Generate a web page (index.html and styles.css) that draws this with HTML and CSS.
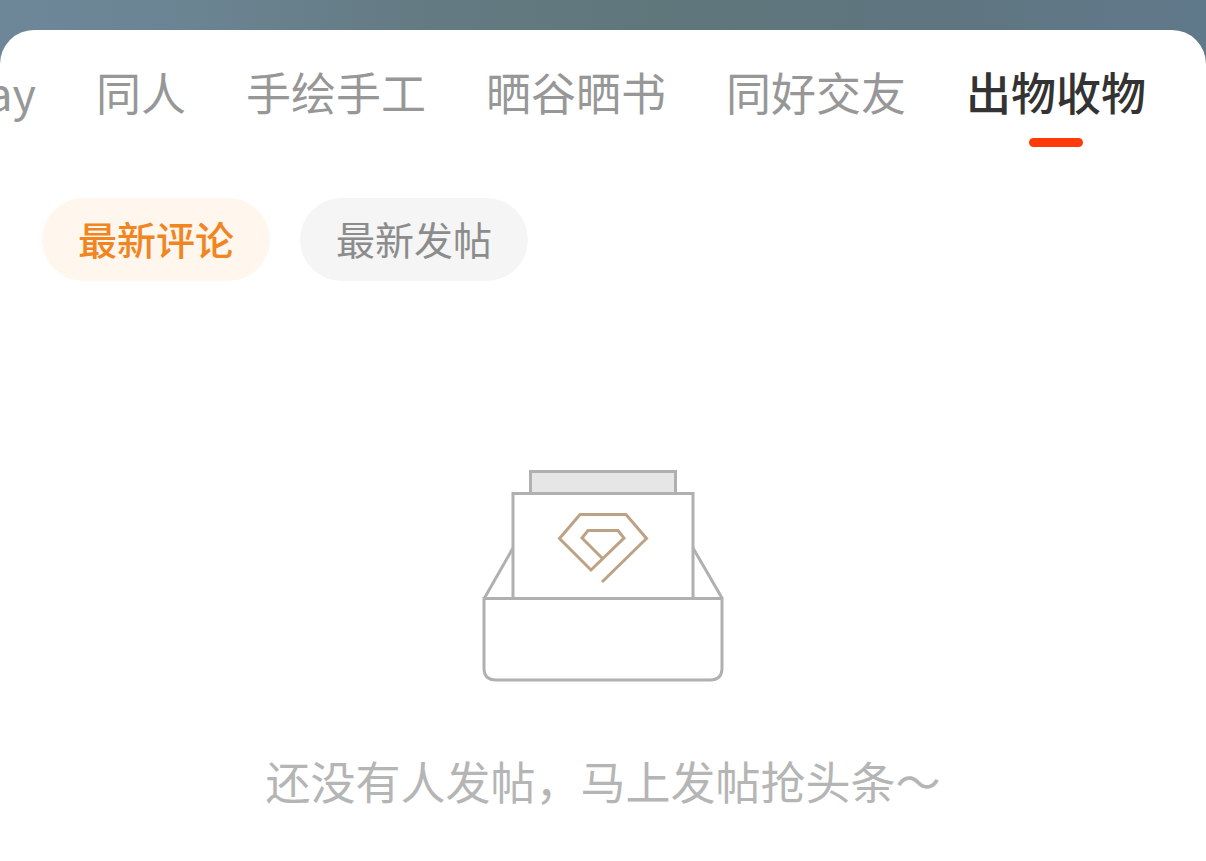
FILE: index.html
```html
<!DOCTYPE html>
<html lang="zh-CN">
<head>
  <meta charset="UTF-8" />
  <meta name="viewport" content="width=device-width, initial-scale=1.0" />
  <title>出物收物</title>
  <link rel="stylesheet" href="styles.css">
</head>
<body>
  <main class="sheet">
    <nav class="tabs">
      <button class="tab" type="button">Cosplay</button>
      <button class="tab" type="button">同人</button>
      <button class="tab" type="button">手绘手工</button>
      <button class="tab" type="button">晒谷晒书</button>
      <button class="tab" type="button">同好交友</button>
      <button class="tab active" type="button">出物收物</button>
    </nav>

    <div class="filters">
      <button class="filter active" type="button">最新评论</button>
      <button class="filter" type="button">最新发帖</button>
    </div>

    <section class="empty">
      <svg class="empty-box" viewBox="0 0 242 214" fill="none" aria-hidden="true">
        <g stroke="#b0b0b0" stroke-width="3">
          <path d="M48.500 24V2.500H193.500V24" fill="#e6e6e6" />
          <path d="M31 129V24.500H211V129" fill="#fff" />
          <path d="M31 79L2.500 129M211 79L240 129" />
          <path d="M2 129.500H240V199Q240 211 228 211H14Q2 211 2 199Z" fill="#fff" />
        </g>
        <path d="M120 113L164.500 69.500L144 45.500H98L77.500 69.500L109 101L142 69L136 61.500H106L100 69L120 89" stroke="#bda285" stroke-width="3" />
      </svg>
      <p class="empty-text">还没有人发帖，马上发帖抢头条～</p>
    </section>
  </main>
</body>
</html>
```

FILE: styles.css
```css
:root {
  --accent: #ff3a0a;
  --orange: #f08522;
  --orange-bg: #fff6ed;
  --text-color: #333333;
  --muted: #979797;
  --chip-bg: #f5f5f5;
}

* {
  box-sizing: border-box;
  margin: 0;
  padding: 0;
}

body {
  font-family: "Noto Sans CJK SC", sans-serif;
  background: linear-gradient(90deg, #6d8799 0%, #6b8492 16%, #637a82 36%, #5f767b 55%, #5f757f 75%, #60798a 100%);
  display: flex;
  flex-direction: column;
  min-height: 100vh;
  padding-top: 30px;
}

button {
  background: none;
  border: none;
  font-family: inherit;
  cursor: pointer;
  white-space: nowrap;
}

.sheet {
  flex: 1;
  background: #ffffff;
  border-radius: 34px 34px 0 0;
  overflow: hidden;
}

/* scrolled to the last tab */
.tabs {
  display: flex;
  justify-content: flex-end;
  gap: 60px;
  padding: 30px 60px 0;
}

.tab {
  position: relative;
  flex-shrink: 0;
  height: 87px;
  padding-bottom: 23px;
  font-size: 45px;
  line-height: 64px;
  color: var(--muted);
}

.tab.active {
  font-weight: 500;
  color: var(--text-color);
}

.tab.active::after {
  content: "";
  position: absolute;
  left: 50%;
  bottom: 0;
  width: 54px;
  height: 9px;
  margin-left: -27px;
  border-radius: 5px;
  background: var(--accent);
}

.filters {
  display: flex;
  gap: 30px;
  padding: 51px 42px 0;
}

.filter {
  height: 83px;
  padding: 0 36px 2px;
  border-radius: 42px;
  background: var(--chip-bg);
  font-size: 39px;
  line-height: 81px;
  color: #8c8c8c;
}

.filter.active {
  background: var(--orange-bg);
  font-weight: 500;
  color: var(--orange);
}

.empty {
  display: flex;
  flex-direction: column;
  align-items: center;
  padding: 188px 24px 40px;
}

.empty-box {
  width: 242px;
  height: 214px;
}

.empty-text {
  margin-top: 66px;
  font-size: 45px;
  line-height: 64px;
  color: #b5b5b5;
}
```
